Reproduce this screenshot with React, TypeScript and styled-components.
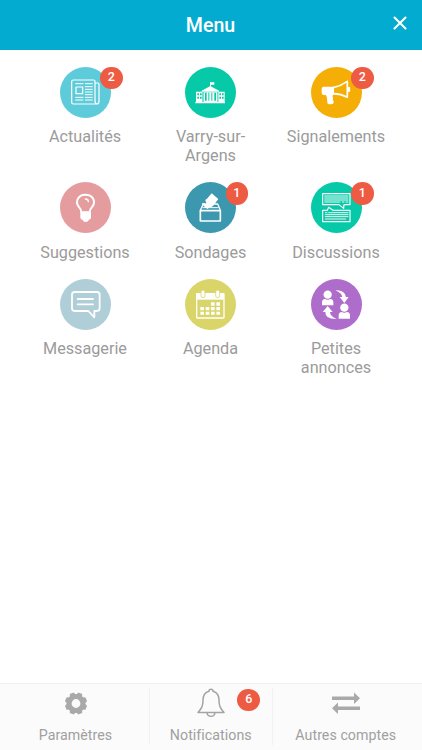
import React from "react";
import styled, { createGlobalStyle } from "styled-components";

const GlobalStyle = createGlobalStyle`
  * { box-sizing: border-box; }
  body { margin: 0; background: #fff; font-family: Roboto, "Liberation Sans", sans-serif; }
`;

const Screen = styled.div`
  display: flex;
  flex-direction: column;
  height: 750px;
  width: 422px;
  overflow: hidden;
  background: #fff;
`;

const Header = styled.header`
  display: grid;
  grid-template-columns: 43px 1fr 44px;
  align-items: center;
  height: 49.5px;
  flex: none;
  background: #04abd0;
  color: #fff;
`;

const Title = styled.h1`
  grid-column: 2;
  margin: 2px 0 0;
  text-align: center;
  font-size: 19.6px;
  font-weight: 500;
  line-height: 24px;
`;

const CloseButton = styled.button`
  display: flex;
  padding: 0 0 3px 15px;
  border: 0;
  background: none;
  color: #fff;
`;

const Grid = styled.main`
  flex: 1;
  display: grid;
  grid-template-columns: repeat(3, 125.5px);
  grid-auto-rows: max-content;
  justify-content: center;
  padding: 17px 1px 0 0;
`;

const Tile = styled.a`
  display: flex;
  flex-direction: column;
  align-items: center;
  padding-bottom: 16.7px;
  color: #9b9b9b;
`;

const Disc = styled.span<{ $color: string }>`
  position: relative;
  display: flex;
  width: 51px;
  height: 51px;
  border-radius: 50%;
  background: ${(p) => p.$color};
`;

const Badge = styled.span`
  display: flex;
  align-items: center;
  justify-content: center;
  width: 22.6px;
  height: 22.6px;
  border-radius: 50%;
  background: #ee5b43;
  color: #fff;
  font-size: 12.5px;
  font-weight: 500;
  line-height: 1;
  padding-bottom: 1px;
`;

const DiscBadge = styled(Badge)`
  position: absolute;
  top: 0;
  left: 40.6px;
`;

const Label = styled.span`
  margin-top: 9.4px;
  width: 100px;
  text-align: center;
  font-size: 16.2px;
  line-height: 19.3px;
`;

const Footer = styled.footer`
  display: grid;
  grid-template-columns: 149px 122.5px 1fr;
  height: 67.5px;
  flex: none;
  padding-top: 4px;
  border-top: 1.5px solid #f1f1f1;
  background: #fbfbfb;
`;

const Tab = styled.a`
  position: relative;
  display: flex;
  flex-direction: column;
  align-items: center;
  height: 57px;
  color: #a0a0a0;
  &:first-child { padding-left: 2px; }
  & + & { border-left: 1px solid #f1f1f1; }
  &:last-child { padding-right: 3px; }
`;

const TabIcon = styled.span`
  display: flex;
  height: 36px;
`;

const TabLabel = styled.span`
  margin-top: 3px;
  font-size: 14.2px;
  letter-spacing: 0.05px;
  line-height: 17px;
  white-space: nowrap;
`;

const TabBadge = styled(Badge)`
  position: absolute;
  top: 1px;
  left: 87.4px;
`;

const Glyph = styled.svg`
  width: 51px;
  height: 51px;
  fill: none;
  stroke: #fff;
  stroke-linejoin: round;
  stroke-linecap: round;
`;

const News = () => (
  <Glyph viewBox="89 35 153 153" strokeWidth="3.6">
    <path d="M129 74h61q4 0 4 4v59q0 9 8 9h-73q-5 0-5-5V79q0-5 5-5zM194 83h8q4 0 4 4v50q0 9-6 9" />
    <path d="M137 95h20v20h-20z" />
    <path strokeWidth="3" d="M136 85h22M165 85h21M165 94h21M165 102h21M165 110h21M165 118h21M165 126h21M165 134h21M136 126h22M136 134h22" />
  </Glyph>
);

const TownHall = () => (
  <Glyph viewBox="74 35 153 153">
    <g fill="#fff" stroke="none">
      <path d="M107 109h20v31h-20zM173 109h20v31h-20zM105 139h89v5h-89zM149 80h3v16h-3zM151 81h11v7h-11z" />
      <path d="M124 106l26-14 26 14v3h-52zM129 111h43v29h-43z" />
    </g>
    <path fill="#06c9a8" stroke="none" d="M111 114h5v6h-5zM119 114h5v6h-5zM111 124h5v6h-5zM119 124h5v6h-5zM177 114h5v6h-5zM185 114h5v6h-5zM177 124h5v6h-5zM185 124h5v6h-5zM134 112h5v24h-5zM144 112h3v24h-3zM153 112h3v24h-3zM162 112h5v24h-5zM127 109h2v31h-2zM172 109h2v31h-2z" />
  </Glyph>
);

const Megaphone = () => (
  <Glyph viewBox="92 35 153 153" strokeWidth="5">
    <path fill="#fff" stroke="none" d="M130 94h31v24h-3q-3 4 0 10-2 5 2 11v3q-2 5-8 5h-5q-5 0-6-5l-1-12q0-6-4-11h-6q-6 0-6-7v-11q0-7 6-7z" />
    <path d="M159 97q22-5 42-19v48q-19-10-42-11" />
    <path d="M206 98v9" strokeWidth="7" />
  </Glyph>
);

const Bulb = () => (
  <Glyph viewBox="89 36 153 153" strokeWidth="6">
    <path d="M153 127q-1-10-8-17c-12-17 0-36 20-36s34 18 21 36q-7 7-8 17z" />
    <path fill="#fff" stroke="none" d="M150 125h32v18q0 4-6 6-3 7-10 7t-10-7q-6-2-6-6z" />
    <path strokeWidth="4" d="M165 87q9 0 9 8" />
  </Glyph>
);

const BallotBox = () => (
  <Glyph viewBox="74 36 153 153" strokeWidth="5" strokeLinejoin="miter">
    <path strokeWidth="4" d="M135 102h-6l-9 19M163 102h9l8 19" />
    <path d="M120 122h60v31h-60z" />
    <path fill="#fff" stroke="none" d="M154 70l20 17-14 19q-5 7-12 5l-6 6-6-4-11-10 2-5 9 4 2-3-3-7q0-5 5-6z" />
    <path d="M128 113h45" strokeWidth="3" />
  </Glyph>
);

const Forum = () => (
  <Glyph viewBox="92 36 153 153" strokeWidth="3.4" strokeLinejoin="miter">
    <path d="M127 71h82v33h-18l-1 11-14-11h-49zM127 121h14l4-9 13 9h51v34h-82z" />
    <path strokeWidth="2.7" d="M133 78h70M133 84h70M133 90h70M133 96h46M186 96h5M197 96h6M135 128h5M145 128h58M135 134h68M135 140h68M135 147h61" />
  </Glyph>
);

const Message = () => (
  <Glyph viewBox="89 26 153 153" strokeWidth="5.4">
    <path d="M133 65h67q8 0 8 8v41q0 8-8 8h-8v19l-18-19h-41q-8 0-8-8V73q0-8 8-8z" />
    <path d="M142 86h46M142 102h46" />
  </Glyph>
);

const Calendar = () => (
  <Glyph viewBox="74 26 153 153">
    <path strokeWidth="4" d="M111 70h78q2 0 2 2v69q0 2-2 2h-78q-2 0-2-2V72q0-2 2-2z" />
    <path fill="#fff" stroke="none" d="M109 69h82v19h-82z" />
    <g fill="#fff" stroke="#dad568" strokeWidth="2.4">
      <rect x="122" y="59" width="12" height="23" rx="6" />
      <rect x="166" y="59" width="12" height="23" rx="6" />
    </g>
    <path fill="#fff" stroke="none" d="M152 96h11v10h-11zM168 96h11v10h-11zM120 110h11v10h-11zM136 110h11v10h-11zM152 110h11v10h-11zM168 110h11v10h-11zM120 124h11v9h-11zM136 124h11v9h-11zM152 124h11v9h-11zM168 124h11v9h-11z" />
  </Glyph>
);

const Exchange = () => (
  <Glyph viewBox="92 26 153 153">
    <g fill="#fff" stroke="none">
      <circle cx="142" cy="73" r="12.5" />
      <path d="M125 105v-9q0-9 9-10 8 5 16 0 9 1 9 10v9z" />
      <circle cx="192" cy="112" r="12.5" />
      <path d="M175 145v-10q0-9 9-10 8 5 16 0 9 1 9 10v10z" />
      <path d="M165 60q28-2 32 20h8l-13 18-14-18h8q-2-12-21-20z" />
      <path d="M169 146q-35 1-34-21h-8l15-18 15 18h-8q0 12 20 21z" />
    </g>
  </Glyph>
);

const tiles = [
  { label: "Actualités", color: "#5dcbd9", Icon: News, count: 2 },
  { label: "Varry-sur-Argens", color: "#06c9a8", Icon: TownHall },
  { label: "Signalements", color: "#f5ae05", Icon: Megaphone, count: 2 },
  { label: "Suggestions", color: "#e59c9f", Icon: Bulb },
  { label: "Sondages", color: "#3b98ae", Icon: BallotBox, count: 1 },
  { label: "Discussions", color: "#06c9a8", Icon: Forum, count: 1 },
  { label: "Messagerie", color: "#afced8", Icon: Message },
  { label: "Agenda", color: "#dad568", Icon: Calendar },
  { label: "Petites annonces", color: "#ae6ccb", Icon: Exchange },
];

const teeth = [0, 45, 90, 135, 180, 225, 270, 315];

export default function App() {
  return (
    <Screen>
      <GlobalStyle />
      <Header>
        <Title>Menu</Title>
        <CloseButton aria-label="Fermer">
          <svg width="14" height="14" viewBox="0 0 14 14" fill="none" stroke="#fff" strokeWidth="2.1" strokeLinecap="round">
            <path d="M1.500 1.500l11 11M12.500 1.500l-11 11" />
          </svg>
        </CloseButton>
      </Header>
      <Grid>
        {tiles.map(({ label, color, Icon, count }) => (
          <Tile key={label}>
            <Disc $color={color}>
              <Icon />
              {count && <DiscBadge>{count}</DiscBadge>}
            </Disc>
            <Label>{label}</Label>
          </Tile>
        ))}
      </Grid>
      <Footer>
        <Tab>
          <TabIcon>
            <svg width="24" height="34" viewBox="-12 -15.500 24 34" fill="#a9a9a9">
              <circle r="6.900" fill="none" stroke="#a9a9a9" strokeWidth="5" />
              {teeth.map((a) => (
                <path key={a} transform={`rotate(${a + 22.5})`} d="M-3.200-8l.8-2.500q.2-.6.8-.6h3.200q.6 0 .8.600l.8 2.500z" />
              ))}
            </svg>
          </TabIcon>
          <TabLabel>Paramètres</TabLabel>
        </Tab>
        <Tab>
          <TabIcon>
            <svg width="32" height="32" viewBox="0 0 32 32" fill="none" stroke="#a4a4a4" strokeWidth="1.500" strokeLinejoin="round">
              <path d="M14 3.200q0-2 2-2t2 2c4.200 1.200 6 4.500 6 9 0 6 1.500 8.500 5 12.300H3c3.500-3.800 5-6.300 5-12.300 0-4.500 1.800-7.800 6-9zM12 24.800q.6 3.500 4 3.500t4-3.500" />
            </svg>
          </TabIcon>
          <TabLabel>Notifications</TabLabel>
          <TabBadge>6</TabBadge>
        </Tab>
        <Tab>
          <TabIcon>
            <svg width="28" height="34" viewBox="0 0 28 34" fill="#a9a9a9">
              <path d="M0 8.500h22V4.600l6 5.700-6 5.700v-3.900H0zM28 18.500H6v-3.900l-6 5.700 6 5.700v-3.900h22z" />
            </svg>
          </TabIcon>
          <TabLabel>Autres comptes</TabLabel>
        </Tab>
      </Footer>
    </Screen>
  );
}
